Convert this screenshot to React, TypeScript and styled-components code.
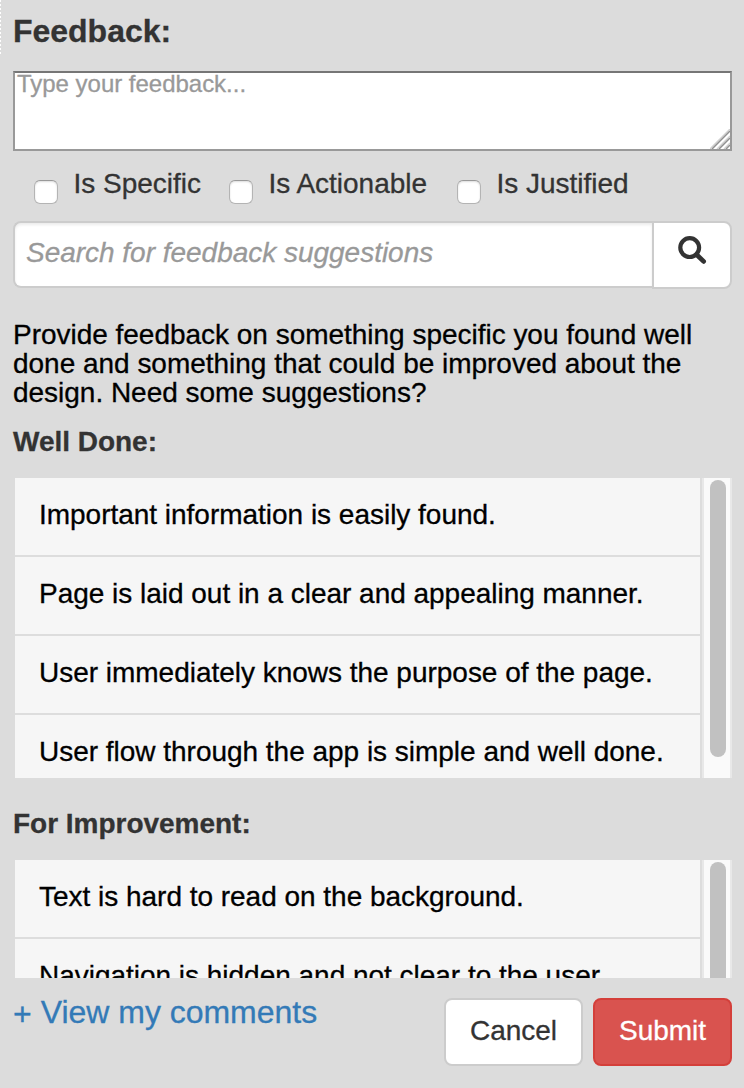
import React from "react";
import styled, { createGlobalStyle } from "styled-components";

const GlobalStyle = createGlobalStyle`
  * { box-sizing: border-box; }
  html, body { margin: 0; background: #dcdcdc; }
  body {
    font-family: "Liberation Sans", Arial, sans-serif;
    font-size: 28px;
    letter-spacing: -0.02px;
    -webkit-text-stroke: 0.3px currentColor;
    color: #333;
    overflow: hidden;
  }
`;

const Panel = styled.main`
  position: relative;
  display: flex;
  flex-direction: column;
  width: 744px;
  height: 1088px;
  padding: 0 12px 0 13px;
  background: #dcdcdc;
`;

const DottedEdge = styled.div`
  position: absolute;
  left: 0;
  top: 0;
  width: 1px;
  height: 54px;
  background: repeating-linear-gradient(#fff 0 2px, #dcdcdc 2px 4px);
`;

const Title = styled.h1`
  margin: 0 0 9px;
  font-size: 32px;
  line-height: 62px;
  font-weight: bold;
`;

const FeedbackBox = styled.div`
  display: flex;
  justify-content: space-between;
  height: 80px;
  flex: none;
  border: 2px solid #999;
  border-top-color: #767676;
  background: #fff;
  padding-left: 2px;
  font-size: 24px;
  line-height: 21px;
  color: #999;
`;

const Grip = styled.svg`
  align-self: flex-end;
  display: block;
`;

const Checks = styled.div`
  display: flex;
  height: 70px;
  flex: none;
  padding-left: 21px;
`;

const Check = styled.label<{ $width: number }>`
  display: flex;
  width: ${(p) => p.$width}px;
  gap: 15.5px;
  line-height: 66px;
  white-space: nowrap;
`;

const Box = styled.span`
  width: 24px;
  height: 24px;
  margin-top: 29px;
  flex: none;
  border: 1px solid #b4b4b4;
  border-top-color: #999;
  border-radius: 6px;
  background: #fff;
  box-shadow: inset 0 1px 2px rgba(0, 0, 0, 0.14);
`;

const SearchGroup = styled.div`
  display: flex;
  align-items: flex-start;
  height: 99px;
  flex: none;
`;

const SearchField = styled.div`
  width: 639px;
  height: 67px;
  padding-left: 11px;
  border: 2px solid #ccc;
  border-right: 0;
  border-radius: 8px 0 0 8px;
  background: #fff;
  box-shadow: inset 0 2px 3px rgba(0, 0, 0, 0.08);
  font-style: italic;
  line-height: 59px;
  color: #999;
`;

const SearchButton = styled.div`
  width: 80px;
  height: 68px;
  border: 2px solid #ccc;
  border-radius: 0 8px 8px 0;
  background: #fff;
  padding: 11px 0 0 22px;
`;

const Intro = styled.p`
  margin: 0 0 4px;
  line-height: 29px;
  color: #000;
  white-space: nowrap;
`;

const Heading = styled.h2<{ $before?: number }>`
  margin: ${(p) => p.$before ?? 0}px 0 5px;
  font-size: 28px;
  line-height: 62px;
  font-weight: bold;
`;

const ListBox = styled.section<{ $height: number }>`
  display: flex;
  height: ${(p) => p.$height}px;
  flex: none;
  margin-left: 2px;
  overflow: hidden;
`;

const Items = styled.div`
  width: 687px;
  border-right: 2px solid #ddd;
`;

const Item = styled.div`
  height: 79px;
  padding-left: 24px;
  border-bottom: 2px solid #ddd;
  background: #f6f6f6;
  line-height: 74px;
  color: #000;
  white-space: nowrap;
`;

const Track = styled.div`
  width: 30px;
  padding: 2px 4px 0 6px;
  border: solid #e8e8e8;
  border-width: 0 2px;
  background: #fafafa;
`;

const Thumb = styled.div`
  width: 16px;
  height: 277px;
  border-radius: 8px;
  background: #c1c1c1;
`;

const Footer = styled.footer`
  display: flex;
  align-items: flex-start;
  padding-top: 20px;
`;

const ViewLink = styled.span`
  flex: 1;
  display: flex;
  gap: 9px;
  margin-top: -16px;
  font-size: 32px;
  line-height: 60px;
  color: #337ab7;
  white-space: nowrap;
`;

const Plus = styled.span`
  padding-top: 2px;
`;

const Button = styled.div<{ $danger?: boolean }>`
  width: 139px;
  height: 68px;
  margin-left: ${(p) => (p.$danger ? 10 : 0)}px;
  border: 2px solid ${(p) => (p.$danger ? "#d43f3a" : "#ccc")};
  border-radius: 8px;
  background: ${(p) => (p.$danger ? "#d9534f" : "#fff")};
  color: ${(p) => (p.$danger ? "#fff" : "#333")};
  line-height: 62px;
  text-align: center;
`;

const wellDone = [
  "Important information is easily found.",
  "Page is laid out in a clear and appealing manner.",
  "User immediately knows the purpose of the page.",
  "User flow through the app is simple and well done.",
];
const improvement = [
  "Text is hard to read on the background.",
  "Navigation is hidden and not clear to the user.",
];

const Suggestions = ({ items, height }: { items: string[]; height: number }) => (
  <ListBox $height={height}>
    <Items>{items.map((t) => <Item key={t}>{t}</Item>)}</Items>
    <Track><Thumb /></Track>
  </ListBox>
);

export default function App() {
  return (
    <Panel>
      <GlobalStyle />
      <DottedEdge />
      <Title>Feedback:</Title>
      <FeedbackBox>
        Type your feedback...
        <Grip width="20" height="20" viewBox="0 0 20 20" fill="none">
          <g stroke="#d0d0d0" strokeWidth="1.4">
            <path d="M0 20 20 0M7 20 20 7M14 20 20 14" />
          </g>
          <g stroke="#909090" strokeWidth="1.5">
            <path d="M2 20 20 2M9 20 20 9M16 20 20 16" />
          </g>
        </Grip>
      </FeedbackBox>
      <Checks>
        <Check $width={195}><Box />Is Specific</Check>
        <Check $width={228}><Box />Is Actionable</Check>
        <Check $width={200}><Box />Is Justified</Check>
      </Checks>
      <SearchGroup>
        <SearchField>Search for feedback suggestions</SearchField>
        <SearchButton>
          <svg width="32" height="32" viewBox="0 0 32 32" fill="none" stroke="#333">
            <circle cx="13.7" cy="13.6" r="9.4" strokeWidth="4.2" />
            <path d="M20.5 20.5 27.6 27.4" strokeWidth="4.8" strokeLinecap="round" />
          </svg>
        </SearchButton>
      </SearchGroup>
      <Intro>
        Provide feedback on something specific you found well<br />
        done and something that could be improved about the<br />
        design. Need some suggestions?
      </Intro>
      <Heading>Well Done:</Heading>
      <Suggestions items={wellDone} height={300} />
      <Heading $before={15}>For Improvement:</Heading>
      <Suggestions items={improvement} height={118} />
      <Footer>
        <ViewLink><Plus>+</Plus><span>View my comments</span></ViewLink>
        <Button>Cancel</Button>
        <Button $danger>Submit</Button>
      </Footer>
    </Panel>
  );
}
